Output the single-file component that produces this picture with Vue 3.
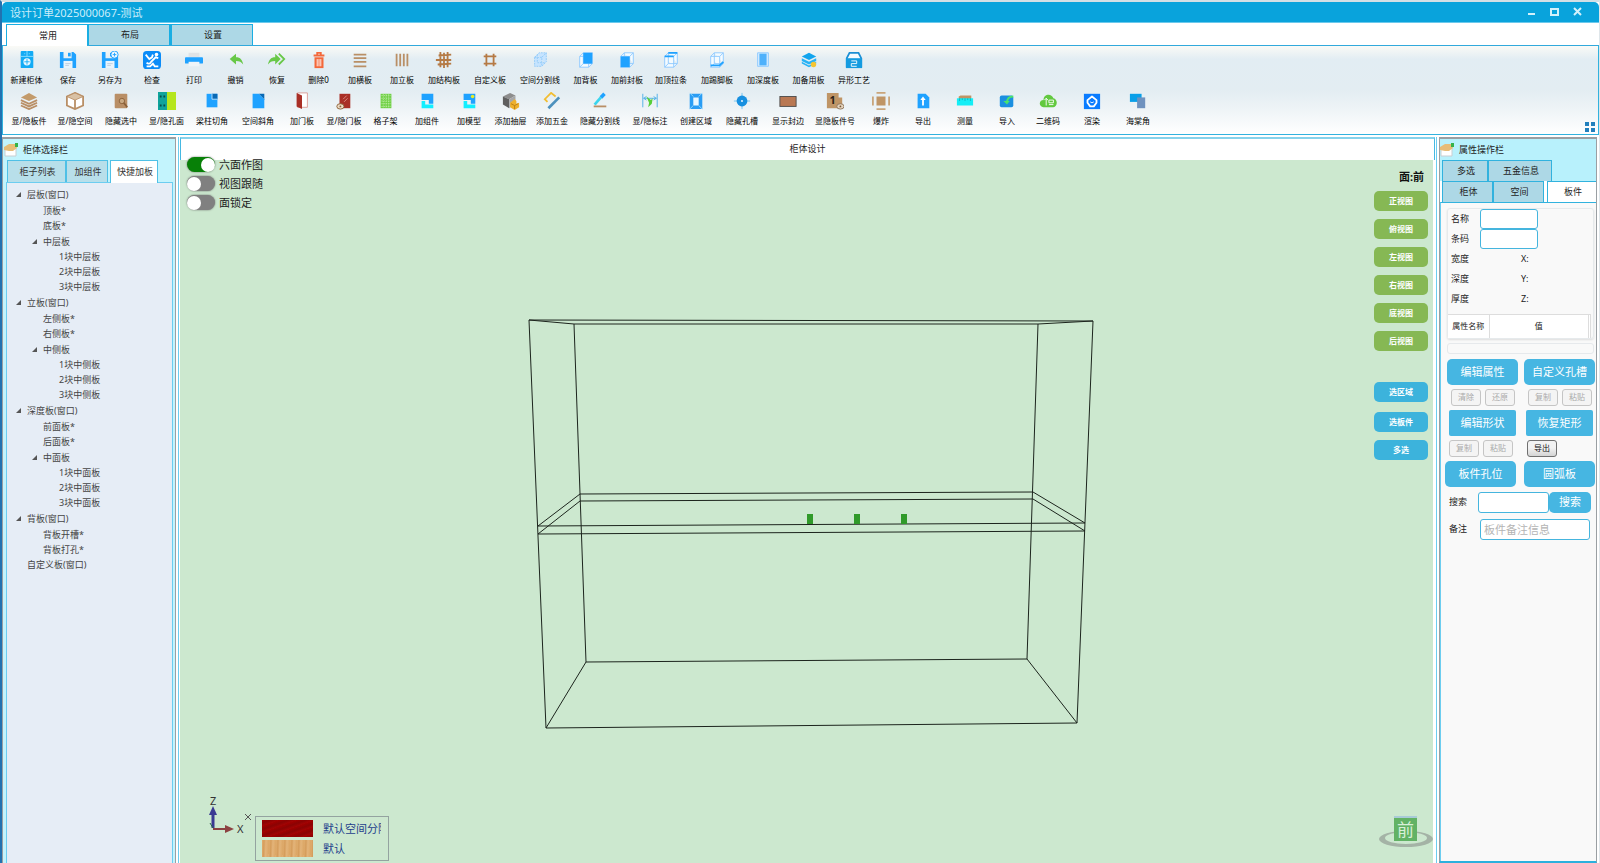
<script setup>
import { ref } from 'vue'

// —— 顶部菜单 ——
const menus = ['常用', '布局', '设置']
const menu = ref('常用')

// —— 图标片段 ——
const blue = '#1fa2ff'
const brown = '#b98f66'
const save = `<path fill="${blue}" d="M1 1h4v7h9V1h2l3 3v15H1z"/><path fill="#e8f4fc" d="M5 11h10v8H5z"/><path fill="${blue}" d="M10 2h3v4h-3z"/><path stroke="#bcd" d="M7 14h6M7 16h4"/>`
const frame = `<path fill="#f4fbff" stroke="#8cc8ff" d="M3 6l4-4h10v12l-4 4H3zM3 6h10v12M13 6l4-4M7 2v12h10M3 18l4-4"/>`

const icons = {
  cabinet: `<rect x="3" y="0" width="14" height="19" rx="1" fill="#12abf5"/><path stroke="#8fe0ff" d="M3 6h14M10 0v6M7 3h1M12 3h1"/><circle cx="10" cy="12" r="4" fill="#e9f8ff"/><path stroke="#12abf5" d="M10 9v6M7 12h6"/>`,
  save,
  saveAs: save + `<circle cx="15" cy="4" r="4" fill="#eef8ff" stroke="${blue}"/><path stroke="${blue}" d="M15 2v4M13 4h4"/>`,
  check: `<rect x="0" y="0" width="20" height="20" rx="4" fill="#0b8cf8"/><path fill="none" stroke="#fff" stroke-width="2" d="M3 4l4 5 3-2 1-3M4 13c2 2 4 1 5-1l5-5 3 1M4 17h4l3-3 2 3h4"/><circle cx="15" cy="4" r="2" fill="#fff"/>`,
  print: `<path fill="#dfe3e6" d="M4 2h12v5H4z"/><rect x="0" y="7" width="20" height="7" rx="1" fill="${blue}"/><path fill="#eef4f8" d="M4 12h12v5H4z"/>`,
  undo: `<path fill="#68c848" d="M3 9l7-6v4c5 0 7 3 8 8-2-3-4-4-8-4v4z"/>`,
  redo: `<path fill="#68c848" d="M14 9L8 3v4c-5 0-7 3-8 8 2-3 4-4 8-4v4z"/><path fill="none" stroke="#68c848" stroke-width="2" d="M12 3l6 6-6 6"/>`,
  trash: `<path fill="none" stroke="#f4683a" stroke-width="2" d="M4 5h12M8 4V2h4v2"/><path fill="#f4683a" d="M5 7h10v12H5z"/><path stroke="#fff" d="M8 9v8M10 9v8M12 9v8"/>`,
  rows: `<path stroke="${brown}" stroke-width="2" d="M3 4h14M3 8h14M3 12h14M3 17h14"/>`,
  cols: `<path stroke="${brown}" stroke-width="2" d="M4 3v14M8 3v14M12 3v14M16 3v14"/>`,
  grid: `<path stroke="#b57a45" stroke-width="2" d="M4 5l14-1M1 10h17M3 15l15-1M6 1v17M10 2v17M14 1v17"/>`,
  hash: `<path stroke="#b57a45" stroke-width="2" d="M3 6h14M3 14h14M6 3v14M14 3v14"/>`,
  split: `<g fill="#c6e4ff" stroke="#8fc9f8" stroke-dasharray="2 1"><path d="M4 7l5-5h8v10l-5 5H4zM4 7h8v10M12 7l5-5M7 4v9h8"/></g>`,
  backPanel: frame + `<path fill="${blue}" d="M7 2h10v12H7z"/>`,
  frontPanel: frame + `<path fill="${blue}" d="M3 6h10v12H3z"/>`,
  topBar: frame + `<path stroke="${blue}" stroke-width="2" d="M3 6h10M7 2h10"/>`,
  kickPanel: frame + `<path stroke="${blue}" stroke-width="2" d="M3 16h10l4-4"/>`,
  depthPanel: `<path fill="#d7edff" stroke="#8cc8ff" d="M4 2h12v15H4z"/><path fill="#4fb1fb" d="M6 3h8v13H6z"/>`,
  layers: `<path fill="#10a4ee" d="M10 2l8 4-8 4-8-4z"/><path fill="#26b2f5" d="M2 8l8 4 8-4v3l-8 4-8-4zM2 12l8 4 8-4v2l-8 4-8-4z"/><circle cx="15" cy="15" r="3" fill="#f4c534"/>`,
  craft: `<path fill="#f4fbff" stroke="#1c8fd4" stroke-width="2" d="M2 8l3-6h10l3 6v9H2z"/><path fill="#149be0" d="M1 8h18v11H1z"/><path fill="none" stroke="#fff" d="M7 11h6v3H7v3h6"/>`,
  boards: `<path fill="#c39b6b" d="M10 1l9 5-9 4-9-4z"/><path fill="none" stroke="#b98f66" stroke-width="2" d="M1 9l9 4 9-4M1 12l9 4 9-4M1 15l9 4 9-4"/>`,
  cube: `<path fill="#fff" stroke="#b98f66" stroke-width="2" d="M10 1l9 4v10l-9 4-9-4V5z"/><path fill="#d9c1a4" stroke="#b98f66" stroke-width="1" d="M10 1l9 4-9 4-9-4z"/><path stroke="#b98f66" stroke-width="2" d="M10 9v10"/>`,
  hideSel: `<rect x="3" y="2" width="14" height="16" rx="1" fill="#b98f66"/><circle cx="11" cy="10" r="3" fill="#c9a982" stroke="#8a6038"/><path stroke="#8a6038" stroke-width="2" d="M13 12l4 5"/>`,
  holes: `<path fill="#0fa39b" d="M0 0h10v20H0z"/><path fill="#b5e61d" d="M10 0h10v20H10z"/><path stroke="#064d4a" stroke-width="2" stroke-dasharray="2 2" d="M2 5h6M2 15h6"/>`,
  notch: `<path fill="${blue}" d="M4 2h12v15H4z"/><path fill="#0869b5" d="M10 2h6v6h-6z"/><path stroke="#bfe4ff" d="M10 2v6h6" fill="none"/>`,
  bevel: `<path fill="${blue}" d="M4 2h7l6 6v10H4z"/><path fill="#0869b5" d="M11 2h6v6z"/>`,
  door: `<path fill="#fff" stroke="#d99b95" d="M5 1h11v16H5z"/><path fill="#a92f26" d="M4 1l6 3v15l-6-3z"/>`,
  hideDoor: `<rect x="5" y="2" width="12" height="16" fill="#a92f26"/><path stroke="#dc8e86" d="M9 8l4-4M10 11l4-4"/><ellipse cx="6" cy="16" rx="4" ry="3" fill="#ead9c3" stroke="#8a6038"/><circle cx="6" cy="16" r="1" fill="#8a6038"/>`,
  lattice: `<path fill="#6fd045" d="M4 2h12v16H4z"/><path stroke="#c4efaf" stroke-dasharray="1 1" d="M4 4h12M4 7h12M4 10h12M4 13h12M4 16h12M7 2v16M10 2v16M13 2v16"/>`,
  part: `<path fill="${blue}" d="M4 2h13v11h-5V9H4z"/><path fill="#12efff" d="M4 10h4v4h9v4H4z"/>`,
  model: `<path fill="${blue}" d="M4 2h13v11h-5V9H4z"/><path fill="#12efff" d="M4 10h4v4h9v4H4z"/><circle cx="14" cy="5" r="2" fill="#e8ec28"/>`,
  drawer: `<path fill="#8d8d8d" d="M1 5l8-4 6 3-7 4z"/><path fill="#5f5f5f" d="M1 5l7 3v10l-7-4z"/><path fill="#a7a7a7" d="M8 8l7-4v8l-7 6z"/><path fill="#efb12d" d="M9 12l5-4 2 2v3l3-1v5l-5 3-5-3z"/><path fill="none" stroke="#b97d10" d="M10 13l4 2 4-2M14 15v4"/>`,
  hardware: `<path fill="none" stroke="#f2bd31" stroke-width="2" d="M5 11L2 8l7-7 5 4"/><path stroke="#4d91bd" stroke-width="3" d="M6 18L18 6"/>`,
  hideLine: `<path stroke="#1fa2ff" stroke-width="4" d="M15 2l-4 4"/><path stroke="#39d5ee" stroke-width="3" d="M11 6l-7 8"/><path stroke="${brown}" stroke-width="2" d="M3 16h14"/>`,
  dimension: `<path fill="none" stroke="#4aaee6" stroke-width="1" d="M2 2v15M18 2v15M3 7h14M6 5L3 7l3 2M14 5l3 2-3 2"/><path fill="#56cf38" d="M6 5l5 4 2-2-1 6-4 4 1-5z"/>`,
  region: `<path fill="#e9f7ff" stroke="#2a9df4" stroke-width="4" d="M5 4h10v13H5z"/><path stroke="#9adcff" stroke-width="1" d="M3 1l4 4M17 1l-4 4M3 19l4-4M17 19l-4-4"/>`,
  hole: `<path stroke="#6cc3f5" d="M10 1v18M1 10h18"/><circle cx="10" cy="10" r="6" fill="#1790e0"/><circle cx="10" cy="10" r="1" fill="#fff"/>`,
  edge: `<rect x="1" y="5" width="18" height="11" fill="#b97853" stroke="#4a4a4a" stroke-width="1"/>`,
  number: `<path fill="#bf9566" d="M1 1h13v17H1zM14 6h4v11h-4z"/><text x="4" y="13" font-size="12" font-weight="bold" fill="#2b2118">1</text><ellipse cx="16" cy="16" rx="4" ry="3" fill="#e4d3bd" stroke="#8d755b"/><circle cx="16" cy="16" r="1" fill="#735637"/>`,
  explode: `<path fill="#bf9566" d="M5 5h10v10H5z"/><path stroke="#c9a57b" stroke-width="2" fill="none" d="M5 1h10M5 19h10M1 5v10M19 5v10"/>`,
  export: `<path fill="${blue}" d="M4 2h9l4 4v12H4z"/><path stroke="#fff" stroke-width="2" d="M10 15V8"/><path fill="#fff" d="M7 9l3-4 3 4z"/>`,
  measure: `<path fill="#bf9566" d="M3 5l2-1h12v4H3z"/><path fill="#14eef6" d="M1 7h18v8H1z"/><path stroke="#0fb3bd" d="M4 7v3M7 7v2M10 7v3M13 7v2M16 7v3"/>`,
  import: `<rect x="2" y="4" width="15" height="13" rx="2" fill="#1b8fe0"/><path fill="none" stroke="#49e36c" stroke-width="2" d="M17 5c-5 0-7 2-7 7"/><path fill="#49e36c" d="M6 10h7l-3 4z"/>`,
  qrcode: `<path fill="#62c93f" d="M5 17c-6-1-5-8 0-8 0-7 9-8 11-2 5 1 5 9 0 10z"/><path stroke="#fff" fill="none" d="M8 15V7M6 9l2-2 2 2M11 9h5v3h-5zM11 14h5"/>`,
  render: `<rect x="1" y="2" width="18" height="17" fill="#0a7cff"/><path fill="none" stroke="#fff" stroke-width="2" stroke-linejoin="round" d="M5 9l5-4 5 4v3l-3 4H8l-3-4z"/><path fill="none" stroke="#fff" d="M8 11q2 2 4 0"/>`,
  corner: `<path fill="#0a9fe8" d="M1 2h13v9H1z"/><path fill="#6f92bf" d="M9 6h9v12H9z"/>`,
}

// —— 工具栏：图标、文字、宽度 ——
const toolRows = [
  [
    ['cabinet', '新建柜体', 41], ['save', '保存', 42], ['saveAs', '另存为', 42], ['check', '检查', 42],
    ['print', '打印', 42], ['undo', '撤销', 41], ['redo', '恢复', 42], ['trash', '删除0', 41],
    ['rows', '加横板', 42], ['cols', '加立板', 42], ['grid', '加结构板', 42], ['hash', '自定义板', 50],
    ['split', '空间分割线', 50], ['backPanel', '加背板', 41], ['frontPanel', '加前封板', 42],
    ['topBar', '加顶拉条', 46], ['kickPanel', '加踢脚板', 46], ['depthPanel', '加深度板', 46],
    ['layers', '加备用板', 45], ['craft', '异形工艺', 46],
  ],
  [
    ['boards', '显/隐板件', 46], ['cube', '显/隐空间', 46], ['hideSel', '隐藏选中', 46], ['holes', '显/隐孔面', 45],
    ['notch', '梁柱切角', 46], ['bevel', '空间斜角', 46], ['door', '加门板', 42], ['hideDoor', '显/隐门板', 42],
    ['lattice', '格子架', 41], ['part', '加组件', 42], ['model', '加模型', 42], ['drawer', '添加抽屉', 41],
    ['hardware', '添加五金', 42], ['hideLine', '隐藏分割线', 54], ['dimension', '显/隐标注', 46],
    ['region', '创建区域', 46], ['hole', '隐藏孔槽', 46], ['edge', '显示封边', 46], ['number', '显隐板件号', 48],
    ['explode', '爆炸', 44], ['export', '导出', 40], ['measure', '测量', 44], ['import', '导入', 40],
    ['qrcode', '二维码', 42], ['render', '渲染', 46], ['corner', '海棠角', 46],
  ],
]

// —— 左侧：快捷加板 ——
const leftTabs = ['柜子列表', '加组件', '快捷加板']
const leftTab = ref('快捷加板')

const tree = [
  { text: '层板(窗口)', depth: 0, open: true },
  { text: '顶板*', depth: 1 },
  { text: '底板*', depth: 1 },
  { text: '中层板', depth: 1, open: true },
  { text: '1块中层板', depth: 2 },
  { text: '2块中层板', depth: 2 },
  { text: '3块中层板', depth: 2 },
  { text: '立板(窗口)', depth: 0, open: true },
  { text: '左侧板*', depth: 1 },
  { text: '右侧板*', depth: 1 },
  { text: '中侧板', depth: 1, open: true },
  { text: '1块中侧板', depth: 2 },
  { text: '2块中侧板', depth: 2 },
  { text: '3块中侧板', depth: 2 },
  { text: '深度板(窗口)', depth: 0, open: true },
  { text: '前面板*', depth: 1 },
  { text: '后面板*', depth: 1 },
  { text: '中面板', depth: 1, open: true },
  { text: '1块中面板', depth: 2 },
  { text: '2块中面板', depth: 2 },
  { text: '3块中面板', depth: 2 },
  { text: '背板(窗口)', depth: 0, open: true },
  { text: '背板开槽*', depth: 1 },
  { text: '背板打孔*', depth: 1 },
  { text: '自定义板(窗口)', depth: 0 },
]

// —— 画布 ——
const switches = ref([
  { text: '六面作图', on: true },
  { text: '视图跟随', on: false },
  { text: '面锁定', on: false },
])
const views = ['正视图', '俯视图', '左视图', '右视图', '底视图', '后视图']

// —— 右侧：板件属性 ——
const rightTab = ref('板件')
const name = ref('')
const code = ref('')
const keyword = ref('')
const remark = ref('')
const sizes = [
  ['宽度', 'X:'],
  ['深度', 'Y:'],
  ['厚度', 'Z:'],
]
</script>

<template>
  <div class="app">
    <header class="titlebar">
      <h1>设计订单2025000067-测试</h1>
      <div class="window-buttons">
        <button aria-label="最小化"><svg viewBox="0 0 10 10"><path d="M1 7h7" /></svg></button>
        <button aria-label="最大化"><svg viewBox="0 0 10 10"><path d="M1 2h7v6h-7z" /></svg></button>
        <button aria-label="关闭"><svg viewBox="0 0 10 10"><path d="M1 1l7 7M8 1l-7 7" /></svg></button>
      </div>
    </header>

    <nav class="menus">
      <button v-for="m in menus" :key="m" :class="{ active: menu === m }" @click="menu = m">{{ m }}</button>
    </nav>

    <section class="ribbon">
      <div v-for="(row, i) in toolRows" :key="i" class="tool-row">
        <button v-for="[icon, text, w] in row" :key="text" class="tool" :style="{ width: w + 'px' }">
          <svg viewBox="0 0 20 20" v-html="icons[icon]"></svg>
          <span>{{ text }}</span>
        </button>
      </div>
      <button class="tiles" aria-label="布局切换">
        <svg viewBox="0 0 10 10"><path d="M0 0h4v4h-4zM6 0h4v4h-4zM0 6h4v4h-4zM6 6h4v4h-4z" /></svg>
      </button>
    </section>

    <main class="main">
      <aside class="panel left">
        <h2>
          <svg viewBox="0 0 16 14"><path fill="#fff" stroke="#c9ced2" d="M1 5h11v8H1z" /><path fill="#e7bd78" d="M0 4l5-3h7l1 4-4 3H5L0 7z" /><path fill="#35b24a" d="M11 0h3v4h-3z" /></svg>
          柜体选择栏
        </h2>
        <div class="left-tabs">
          <button v-for="t in leftTabs" :key="t" :class="{ active: leftTab === t }" @click="leftTab = t">{{ t }}</button>
        </div>
        <ul class="tree">
          <li v-for="n in tree" :key="n.text" :class="['depth-' + n.depth, { branch: n.open }]">
            <svg v-if="n.open" viewBox="0 0 6 6"><path d="M6 0v6H0z" /></svg>
            <span>{{ n.text }}</span>
          </li>
        </ul>
      </aside>

      <section class="design">
        <h2>柜体设计</h2>
        <div class="canvas">
          <svg class="scene" viewBox="0 0 1253 703">
            <g fill="none" stroke="#1c241d" stroke-width="1">
              <path d="M349 160L913 161L897 563L366 568z" />
              <path d="M394 164L858 164L847 499L406 502z" />
              <path d="M349 160L394 164M913 161L858 164M366 568L406 502M897 563L847 499" />
              <path d="M358 366L905 363L853 332L400 334zM358 374L905 371L853 339L400 341z" />
            </g>
            <path fill="#309a2a" d="M627 354h6v10h-6zM674 354h6v10h-6zM721 354h6v10h-6z" />
          </svg>

          <div class="switches">
            <label v-for="s in switches" :key="s.text">
              <input v-model="s.on" type="checkbox" />
              <span>{{ s.text }}</span>
            </label>
          </div>

          <div class="views">
            <strong>面:前</strong>
            <button v-for="v in views" :key="v">{{ v }}</button>
            <button class="pick first">选区域</button>
            <button class="pick second">选板件</button>
            <button class="pick">多选</button>
          </div>

          <div class="corner-left">
            <svg class="axis" viewBox="0 0 50 50">
              <path stroke="#3a3a93" stroke-width="3" d="M8 37V22" /><path fill="#3a3a93" d="M4 24l4-9 4 9z" />
              <path stroke="#8c4242" stroke-width="2" d="M8 38h14" /><path fill="#8c4242" d="M20 34l9 4-9 4z" />
              <path stroke="#27694a" stroke-width="1" d="M5 32l3 5" />
              <text x="5" y="14">Z</text>
              <text x="32" y="42">X</text>
              <path stroke="#555" d="M40 23l6 6M46 23l-6 6" />
            </svg>
            <ul class="legend">
              <li><i class="red"></i><span>默认空间分隔</span></li>
              <li><i class="wood"></i><span>默认</span></li>
            </ul>
          </div>

          <svg class="view-cube" viewBox="0 0 54 34">
            <path fill="#a4b3a6" fill-rule="evenodd" d="M0 23a27 8 0 0 1 54 0a27 8 0 0 1-54 0zM6 22a21 6 0 0 0 42 0a21 6 0 0 0-42 0z" />
            <path fill="#62b265" d="M15 2h23v23H15z" />
            <path stroke="#85aee0" d="M15 1h23" />
            <text x="18" y="20">前</text>
          </svg>
        </div>
      </section>

      <aside class="panel right">
        <h2>
          <svg viewBox="0 0 16 14"><path fill="#fff" stroke="#c9ced2" d="M1 5h11v8H1z" /><path fill="#e7bd78" d="M0 4l5-3h7l1 4-4 3H5L0 7z" /><path fill="#35b24a" d="M11 0h3v4h-3z" /></svg>
          属性操作栏
        </h2>
        <div class="right-tabs top">
          <button @click="rightTab = '多选'">多选</button>
          <button class="wide" @click="rightTab = '五金信息'">五金信息</button>
        </div>
        <div class="right-tabs">
          <button v-for="t in ['柜体', '空间', '板件']" :key="t" :class="{ active: rightTab === t }" @click="rightTab = t">{{ t }}</button>
        </div>

        <div class="props">
          <div class="group">
            <div class="field">
              <label for="board-name">名称</label>
              <input id="board-name" v-model="name" type="text" />
            </div>
            <div class="field">
              <label for="board-code">条码</label>
              <input id="board-code" v-model="code" type="text" />
            </div>
            <div v-for="[size, axis] in sizes" :key="size" class="field">
              <span class="size">{{ size }}</span>
              <span>{{ axis }}</span>
            </div>
            <table>
              <thead>
                <tr><th>属性名称</th><th>值</th><th></th></tr>
              </thead>
            </table>
          </div>
          <div class="bar"></div>

          <div class="actions">
            <div class="pair">
              <button class="big">编辑属性</button>
              <button class="big">自定义孔槽</button>
            </div>
            <div class="smalls inset">
              <button disabled>清除</button><button disabled>还原</button>
              <button class="apart" disabled>复制</button><button disabled>粘贴</button>
            </div>
            <div class="pair narrow">
              <button class="big">编辑形状</button>
              <button class="big">恢复矩形</button>
            </div>
            <div class="smalls">
              <button disabled>复制</button><button disabled>粘贴</button>
              <button class="far">导出</button>
            </div>
            <div class="pair spread">
              <button class="big">板件孔位</button>
              <button class="big">圆弧板</button>
            </div>
          </div>

          <div class="search">
            <label for="search">搜索</label>
            <input id="search" v-model="keyword" type="text" />
            <button class="big">搜索</button>
          </div>
          <div class="search remark">
            <label for="remark">备注</label>
            <input id="remark" v-model="remark" type="text" placeholder="板件备注信息" />
          </div>
        </div>
      </aside>
    </main>
  </div>
</template>

<style>
body {
  margin: 0;
  background: #fff;
}
</style>

<style scoped>
.app {
  box-sizing: border-box;
  display: flex;
  flex-direction: column;
  min-height: 100vh;
  border-left: 2px solid #2272b0;
  border-right: 1px solid #dfe6ea;
  border-top: 2px solid #d3dfe5;
  background: #fff;
  color: #222;
  font-family: 'Noto Sans', 'Noto Sans CJK SC', sans-serif;
  font-size: 9px;
  line-height: 14px;
}
.app *,
.app *::before {
  box-sizing: border-box;
}
button,
input {
  margin: 0;
  padding: 0;
  font: inherit;
  color: inherit;
}
button {
  white-space: nowrap;
}
h1,
h2,
ul {
  margin: 0;
  padding: 0;
  font-size: inherit;
  font-weight: normal;
  list-style: none;
}

/* 标题栏 */
.titlebar {
  display: flex;
  align-items: center;
  justify-content: space-between;
  height: 21px;
  padding: 0 16px 0 8px;
  border-bottom: 1px solid #6cc9ec;
  border-radius: 5px 5px 0 0;
  background: #09a3dc;
  color: #c9edfa;
}
.titlebar h1 {
  padding-top: 2px;
  font-size: 11px;
  line-height: 20px;
}
.window-buttons {
  display: flex;
  gap: 13px;
}
.window-buttons button {
  width: 10px;
  height: 10px;
  border: 0;
  background: none;
}
.window-buttons svg {
  display: block;
  fill: none;
  stroke: #d3f1fb;
  stroke-width: 2;
}

/* 菜单 */
.menus {
  display: flex;
  height: 22px;
  padding: 1px 0 0 4px;
}
.menus button {
  width: 83px;
  padding-left: 2px;
  border: 1px solid #19aee3;
  border-bottom: 0;
  border-left-width: 2px;
  background: #add8e6;
}
.menus .active {
  position: relative;
  z-index: 1;
  width: 81px;
  margin-bottom: -1px;
  border-right: 0;
  border-left-width: 1px;
  background: #fff;
}

/* 工具栏 */
.ribbon {
  position: relative;
  height: 90px;
  padding: 5px 4px 1px 3px;
  border: 1px solid #31b2de;
  border-top-color: #31a9dc;
  background: linear-gradient(#fafaf6, #e2edf3 15%, #e3edf2 50%, #edf3f6 70%, #fff);
}
.tool-row {
  display: flex;
  height: 41px;
}
.tool {
  display: flex;
  flex: none;
  flex-direction: column;
  align-items: center;
  gap: 3px;
  border: 0;
  background: none;
  color: #000;
  font-size: 8px;
  line-height: 16px;
}
.tool svg {
  width: 18px;
  height: 18px;
  fill: none;
}
.tiles {
  position: absolute;
  right: 3px;
  bottom: 2px;
  width: 10px;
  height: 10px;
  border: 0;
  background: none;
}
.tiles svg {
  display: block;
  fill: #2280bd;
}

/* 主体 */
.main {
  display: flex;
  flex: 1;
  gap: 2px;
  padding: 2px 2px 0 0;
}
.panel {
  display: flex;
  flex: none;
  flex-direction: column;
  border: 1px solid #9a9fa3;
  border-top-width: 2px;
  border-bottom: 0;
  background: #c3f4fd;
}
.panel h2 {
  display: flex;
  align-items: center;
  gap: 3px;
  height: 21px;
}
.panel h2 svg {
  width: 16px;
  height: 14px;
}
.left {
  width: 174px;
  padding: 0 2px 0 3px;
}
.left h2 {
  margin-left: -2px;
}
.left-tabs {
  display: flex;
  height: 22px;
  padding-left: 1px;
}
.left-tabs button {
  width: 59px;
  border: 1px solid #4fc0e6;
  border-bottom: 0;
  padding-left: 2px;
  background: #b8dfea;
  color: #333;
}
.left-tabs button:nth-child(2) {
  width: 42px;
  margin-right: 2px;
}
.left-tabs .active {
  position: relative;
  width: 48px;
  margin-bottom: -1px;
  background: #fff;
}
.tree {
  flex: 1;
  padding: 3px 0 0 9px;
  border: 1px solid #6ccdf0;
  border-bottom: 0;
  background: #e6edf6;
  color: #444;
  line-height: 15px;
}
.tree li {
  display: flex;
  align-items: center;
  height: 15px;
  padding-left: 11px;
}
.tree .depth-1 {
  padding-left: 27px;
}
.tree .depth-2 {
  padding-left: 43px;
}
.tree .branch {
  height: 17px;
  padding-left: 0;
}
.tree .branch.depth-1 {
  height: 16px;
  padding-left: 16px;
}
.tree svg {
  width: 5px;
  height: 5px;
  margin-right: 6px;
  fill: #555;
}

/* 设计区 */
.design {
  display: flex;
  flex: 1;
  flex-direction: column;
  min-width: 0;
  padding: 0 3px 0 1px;
  border-right: 1px solid #6ccdf0;
  border-left: 1px solid #6ccdf0;
}
.design h2 {
  height: 23px;
  margin-right: -2px;
  border: 1px solid #45b8e2;
  border-top: 2px solid #86d3ec;
  border-bottom: 0;
  text-align: center;
  line-height: 20px;
}
.canvas {
  position: relative;
  display: flex;
  flex: 1;
  justify-content: space-between;
  background: #cce8cf;
}
.scene {
  position: absolute;
  inset: 0;
  width: 100%;
  height: 100%;
}
.switches {
  position: relative;
  padding-left: 7px;
  margin-top: -5px;
  font-size: 11px;
  line-height: 19px;
}
.switches label {
  display: flex;
  align-items: center;
  gap: 4px;
  height: 19px;
}
.switches input {
  display: flex;
  align-items: center;
  width: 28px;
  height: 15px;
  border-radius: 8px;
  background: #808080;
  box-shadow: 0 0 2px #666;
  appearance: none;
}
.switches input::before {
  width: 14px;
  height: 14px;
  border-radius: 50%;
  background: #fff;
  content: '';
}
.switches input:checked {
  justify-content: flex-end;
  background: #078007;
}
.views {
  position: relative;
  display: flex;
  flex-direction: column;
  align-items: flex-end;
  gap: 8px;
  padding: 10px 5px 0 0;
}
.views strong {
  height: 13px;
  padding-right: 4px;
  color: #111;
  font-size: 11px;
}
.views button {
  width: 54px;
  height: 20px;
  border: 0;
  border-radius: 5px;
  background: #86b854;
  color: #fff;
  font-size: 8px;
  font-weight: bold;
}
.views .pick {
  background: #3cb3dc;
}
.views .first {
  margin-top: 23px;
}
.views .second {
  margin-top: 2px;
}
.corner-left {
  position: absolute;
  bottom: 2px;
  left: 25px;
  display: flex;
  align-items: flex-end;
}
.axis {
  width: 50px;
  height: 50px;
  margin-bottom: 20px;
  font-size: 11px;
  fill: #333;
}
.legend {
  display: flex;
  flex-direction: column;
  gap: 3px;
  width: 134px;
  padding: 3px 6px;
  border: 1px solid #94a3a0;
  color: #1f3f8c;
  font-size: 11px;
  line-height: 17px;
}
.legend li {
  display: flex;
  gap: 10px;
}
.legend i {
  flex: none;
  width: 51px;
  height: 17px;
}
.legend span {
  width: 58px;
  overflow: hidden;
  white-space: nowrap;
}
.legend .red {
  background: repeating-linear-gradient(160deg, #a00000, #8a0303 3px, #a30404 6px);
}
.legend .wood {
  background: repeating-linear-gradient(92deg, #e0ae70, #d59d5c 2px, #e3b47a 4px, #dca766 7px);
}
.view-cube {
  position: absolute;
  right: 0;
  bottom: 13px;
  width: 54px;
  height: 34px;
  fill: #d8efd8;
  font-size: 17px;
}

/* 属性栏 */
.right {
  width: 158px;
  border-bottom: 2px solid #2cb0dd;
}
.right h2 {
  background: #b8f1fc;
}
.right-tabs {
  display: flex;
  height: 21px;
  padding-left: 2px;
  background: #fff;
}
.right-tabs.top {
  background: #b8f1fc;
}
.right-tabs button {
  width: 51px;
  border: 1px solid #31b2de;
  border-bottom: 0;
  padding-left: 2px;
  background: #add8e6;
}
.right-tabs.top button {
  width: 46px;
}
.right-tabs.top .wide {
  width: 64px;
}
.right-tabs .active {
  flex: 1;
  margin-left: 3px;
  border-right: 0;
  background: #fff;
}
.props {
  flex: 1;
  padding: 5px 1px 0 6px;
  border-top: 1px solid #31b2de;
  border-left: 1px solid #6ccdf0;
  background: #f9f9f9;
}
.group {
  width: 147px;
  border: 1px solid #e6eaec;
  border-radius: 3px;
  box-shadow: 0 1px 2px #ddd;
}
.field {
  display: flex;
  align-items: center;
  height: 20px;
  padding-left: 3px;
}
.field label {
  width: 29px;
}
.field .size {
  width: 70px;
}
.props input {
  border: 1px solid #45b5de;
  border-radius: 3px;
  background: #fff;
}
.field input {
  width: 58px;
  height: 20px;
}
table {
  width: 143px;
  margin-top: 5px;
  border-collapse: collapse;
  background: #fff;
  font-size: 8px;
}
th {
  height: 23px;
  padding: 0;
  border: 1px solid #ddd;
  border-width: 1px 1px 0 0;
  font-weight: normal;
}
th:first-child {
  width: 41px;
}
th:last-child {
  width: 2px;
}
.bar {
  width: 147px;
  height: 11px;
  margin: 4px 0 5px;
  border: 1px solid #e6e9ec;
  border-radius: 3px;
}
.actions {
  display: flex;
  flex-direction: column;
  gap: 4px;
}
.pair {
  display: flex;
  gap: 6px;
}
.big {
  width: 71px;
  height: 26px;
  border: 0;
  border-radius: 5px;
  background: #46b6e2;
  color: #fff;
  font-size: 11px;
}
.pair.narrow {
  gap: 10px;
  padding-left: 2px;
}
.pair.spread {
  gap: 8px;
  margin-left: -2px;
}
.narrow .big {
  width: 67px;
  border-radius: 2px;
}
.smalls {
  display: flex;
  gap: 4px;
  padding-left: 2px;
}
.smalls.inset {
  padding-left: 4px;
}
.smalls button {
  width: 30px;
  height: 17px;
  border: 1px solid #707070;
  border-radius: 3px;
  background: linear-gradient(#f2f2f2 45%, #d4d4d4);
  color: #111;
  font-size: 8px;
}
.smalls button:disabled {
  border-color: #c5c5c5;
  background: #f4f4f4;
  color: #aaa;
}
.smalls .apart {
  margin-left: 9px;
}
.smalls .far {
  margin-left: 10px;
}
.search {
  display: flex;
  align-items: center;
  padding: 5px 0 0 2px;
}
.search label {
  width: 29px;
}
.search input {
  width: 71px;
  height: 21px;
  padding: 0 3px;
  font-size: 11px;
}
.search .big {
  width: 42px;
  height: 21px;
}
.remark {
  padding-top: 6px;
}
.remark label {
  width: 31px;
}
.remark input {
  width: 110px;
}
.remark input::placeholder {
  color: #b4b4b4;
}
</style>
